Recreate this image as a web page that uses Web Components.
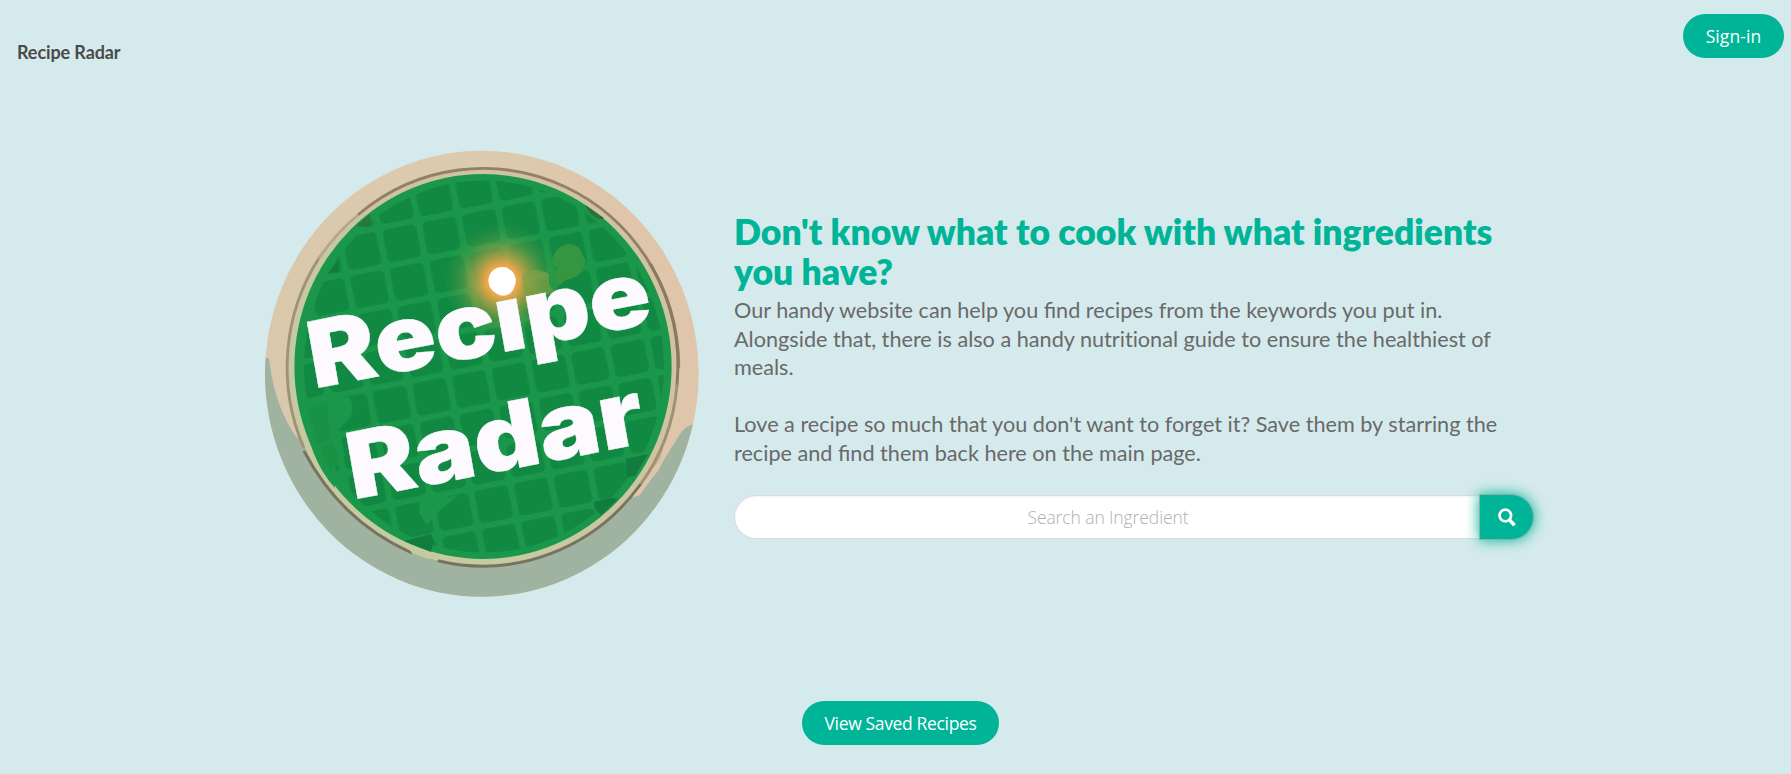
<!DOCTYPE html>
<html lang="en">
<head>
<meta charset="utf-8">
<title>Recipe Radar</title>
<style>
html,body{margin:0;height:100%;overflow:hidden;background:#d5eaec;font-family:Lato,sans-serif}
</style>
</head>
<body>
<recipe-app></recipe-app>
<script>
const define=(name,html)=>customElements.define(name,class extends HTMLElement{
  constructor(){super();this.attachShadow({mode:'open'}).innerHTML=html;}
});

define('pill-button',`<style>
:host{display:block;height:44px}
button{all:unset;box-sizing:border-box;display:flex;align-items:center;justify-content:center;width:100%;height:100%;border-radius:22px;background:#00b498;color:#fff;font:17.500px "Open Sans",sans-serif;letter-spacing:var(--track,0);white-space:nowrap;cursor:pointer}
</style><button><slot></slot></button>`);

define('nav-bar',`<style>
:host{display:flex;justify-content:space-between;align-items:flex-start;height:104px;padding:14px 7px 0 17px;box-sizing:border-box}
b{font:700 18px/24px Lato,sans-serif;letter-spacing:-.1px;color:#4a4a4a;margin-top:26px}
pill-button{width:101px;--track:.1px}
</style><b>Recipe Radar</b><pill-button>Sign-in</pill-button>`);

define('recipe-logo',`<style>
:host{display:block;width:434px;height:447px}
svg{display:block;width:100%;height:100%}
text{font-family:Inter,sans-serif;font-weight:900;fill:#fcfaff;stroke:#fcfaff;stroke-width:.4px}
</style>
<svg viewBox="265 150 434 447">
<defs>
<pattern id="grid" width="40.4" height="39.1" patternUnits="userSpaceOnUse" patternTransform="translate(378.3 228) rotate(-11)"><rect x="3.2" y="3" width="34" height="33.1" rx="4.5" fill="#118942"/></pattern>
<radialGradient id="glow" gradientUnits="userSpaceOnUse" cx="502" cy="281" r="58"><stop offset="0" stop-color="#ffb04a"/><stop offset=".27" stop-color="#f6a849" stop-opacity=".95"/><stop offset=".5" stop-color="#cfa548" stop-opacity=".6"/><stop offset=".75" stop-color="#8fa548" stop-opacity=".24"/><stop offset="1" stop-color="#5fa548" stop-opacity="0"/></radialGradient>
<linearGradient id="wood"><stop offset="0" stop-color="#d9c8ac"/><stop offset=".5" stop-color="#dccbae"/><stop offset=".75" stop-color="#dfc6ab"/></linearGradient>
<linearGradient id="rim" x1="0" y1="1" x2="1" y2="0"><stop offset=".3" stop-color="#c6caa2"/><stop offset=".65" stop-color="#cfc3a0"/></linearGradient>
<clipPath id="plate"><ellipse cx="481.8" cy="373.7" rx="216.8" ry="223"/></clipPath>
<clipPath id="cells"><ellipse cx="484" cy="366.5" rx="180" ry="186"/></clipPath>
</defs>
<ellipse cx="481.8" cy="373.7" rx="216.8" ry="223" fill="url(#wood)"/>
<path clip-path="url(#plate)" fill="#a0b3a0" d="M260 358h9q3 27 11 48 8 20 15 29l60 60 160 40 125-40q10-15 18-24 8-16 16-27c8-14 11-17 18-19q3-1 5-9h10v190H260z"/>
<path fill="#c2b79d" d="M661 457q-5 12-18 17l-6 5 15-25 11-7z"/>
<ellipse cx="483.3" cy="366.700" rx="195" ry="199.500" fill="url(#rim)"/>
<g fill="none" stroke-width="2.9" stroke-linecap="round">
<path stroke="#a19277" d="M303.500 447A195.500 199.500 0 0 1 319 258"/>
<path stroke="#b6a68d" d="M319 258Q336 233 359 214"/>
<path stroke="#928068" d="M359 214A195.500 199.500 0 0 1 678.800 366.700"/>
<path stroke="#8a795f" d="M651 265A195.500 199.500 0 0 1 677 385"/>
<path stroke="#9f9175" d="M677 385Q672 442 640 485"/>
<path stroke="#77745e" d="M640 485A195.500 199.500 0 0 1 439 561"/>
<path stroke="#77745e" d="M411 552.500Q341 521 304.500 452"/>
</g>
<path fill="#c6caa2" d="M401 539l32 14 12 6-17 0-16-6z"/>
<ellipse cx="483" cy="366.500" rx="188.600" ry="192.500" fill="#1a974a"/>
<path clip-path="url(#cells)" fill="url(#grid)" d="M290 170h390v390H290z"/>
<g fill="#1a974a">
<path d="M302 405q20-16 48-7 5 10 0 20l-12 12 7 25q-14 10-10 33-26-28-33-83z"/>
<path d="M421 494q20 6 38 1l-20 16-12 14-8-12z"/>
</g>
<path fill="#1a9244" d="M307 407l20-5 3 38-12 4zM320 447l13-4 7 20-10 9z"/>
<path fill="#2b763a" d="M356 226l14-12 2 11-5 2z"/>
<path fill="#127c3e" d="M328 273l11-13v12zM595 509l-1-7 18-4q4 0 6 1l-17 16zM626 459l22-5-13 22-8 1zM404 541l27-7q4 7 0 18z"/>
<path fill="#326f33" d="M585 205l19 13q-2 3-9-1-6-3-10-12z"/>
<ellipse cx="502" cy="281" rx="58" ry="62" fill="url(#glow)"/>
<path fill="#83a047" opacity=".65" d="M522 275q12-10 27-1-2 14 9 20l-34 2z"/>
<path fill="#34963f" d="M556 251q6-8 15-7 9 1 12 12l3 5q-3 4-4 10-5 8-17 9-3 5-8 5l-4-8 5-7-7-8q2-7 5-11z"/>
<g transform="translate(318.500 388) rotate(-11) skewX(-1)"><text x="-4.500" y="0" font-size="92" textLength="347" lengthAdjust="spacingAndGlyphs">Recipe</text></g>
<g transform="translate(357.300 499) rotate(-11) skewX(-1)"><text x="-4.500" y="0" font-size="92" textLength="300" lengthAdjust="spacingAndGlyphs">Radar</text></g>
<circle cx="502.100" cy="280.800" r="13.700" fill="#fff"/>
</svg>`);

define('search-bar',`<style>
:host{display:flex;align-items:center;width:800px;height:46px}
input{box-sizing:border-box;flex:1;min-width:0;height:44px;margin:0;padding:0 0 0 2px;border:1px solid #dbdbdb;border-right:0;border-radius:22px 0 0 22px;background:#fff;box-shadow:inset 0 1px 2px #0a0a0a0d;text-align:center;font:300 17.500px "Open Sans",sans-serif;letter-spacing:-.1px;outline:none}
input::placeholder{color:#b0b0b0;opacity:1}
button{box-sizing:border-box;width:55px;height:46px;margin:0;padding:0 0 0 1px;border:1px solid #8fb0a8;border-radius:0 23px 23px 0;background:#00b498;box-shadow:0 0 14px #00b498;display:flex;align-items:center;justify-content:center}
</style><input placeholder="Search an Ingredient"><button aria-label="Search"><svg width="18" height="19" viewBox="0 0 18 19" fill="none" stroke="#fff"><circle cx="7.300" cy="7.500" r="5.800" stroke-width="2.700"/><path d="M11.500 12l5 5.200" stroke-width="3.400"/></svg></button>`);

define('hero-section',`<style>
:host{display:grid;grid-template-columns:434px 800px;column-gap:35px;padding:46px 0 0 265px;height:551px;align-items:start}
h1{margin:62px 0 0;font:800 35.500px/40px Lato,sans-serif;color:#00b498}
p{margin:4px 0 0;font:400 21.650px/28.650px Lato,sans-serif;color:#696969}
h1,p{white-space:nowrap}
span{font-variant-ligatures:none}
p+p{margin-top:28px}
search-bar{margin-top:27px}
</style><recipe-logo></recipe-logo><div>
<h1>Don't know what to cook with what ingredients<br>you have?</h1>
<p>Our handy website can help you find recipes from the keywords you put in.<br>Alongside that, there is also a handy <span>nutritional</span> guide to ensure the healthiest of<br>meals.</p>
<p>Love a recipe so much that you don't want to forget it? Save them by starring the<br>recipe and find them back here on the main page.</p>
<search-bar></search-bar></div>`);

define('recipe-app',`<style>
:host{display:flex;flex-direction:column;height:774px}
footer{display:flex;justify-content:center;padding-left:10px}
pill-button{width:197px;--track:-.35px}
</style><nav-bar></nav-bar><hero-section></hero-section><footer><pill-button>View Saved Recipes</pill-button></footer>`);
</script>
</body>
</html>
